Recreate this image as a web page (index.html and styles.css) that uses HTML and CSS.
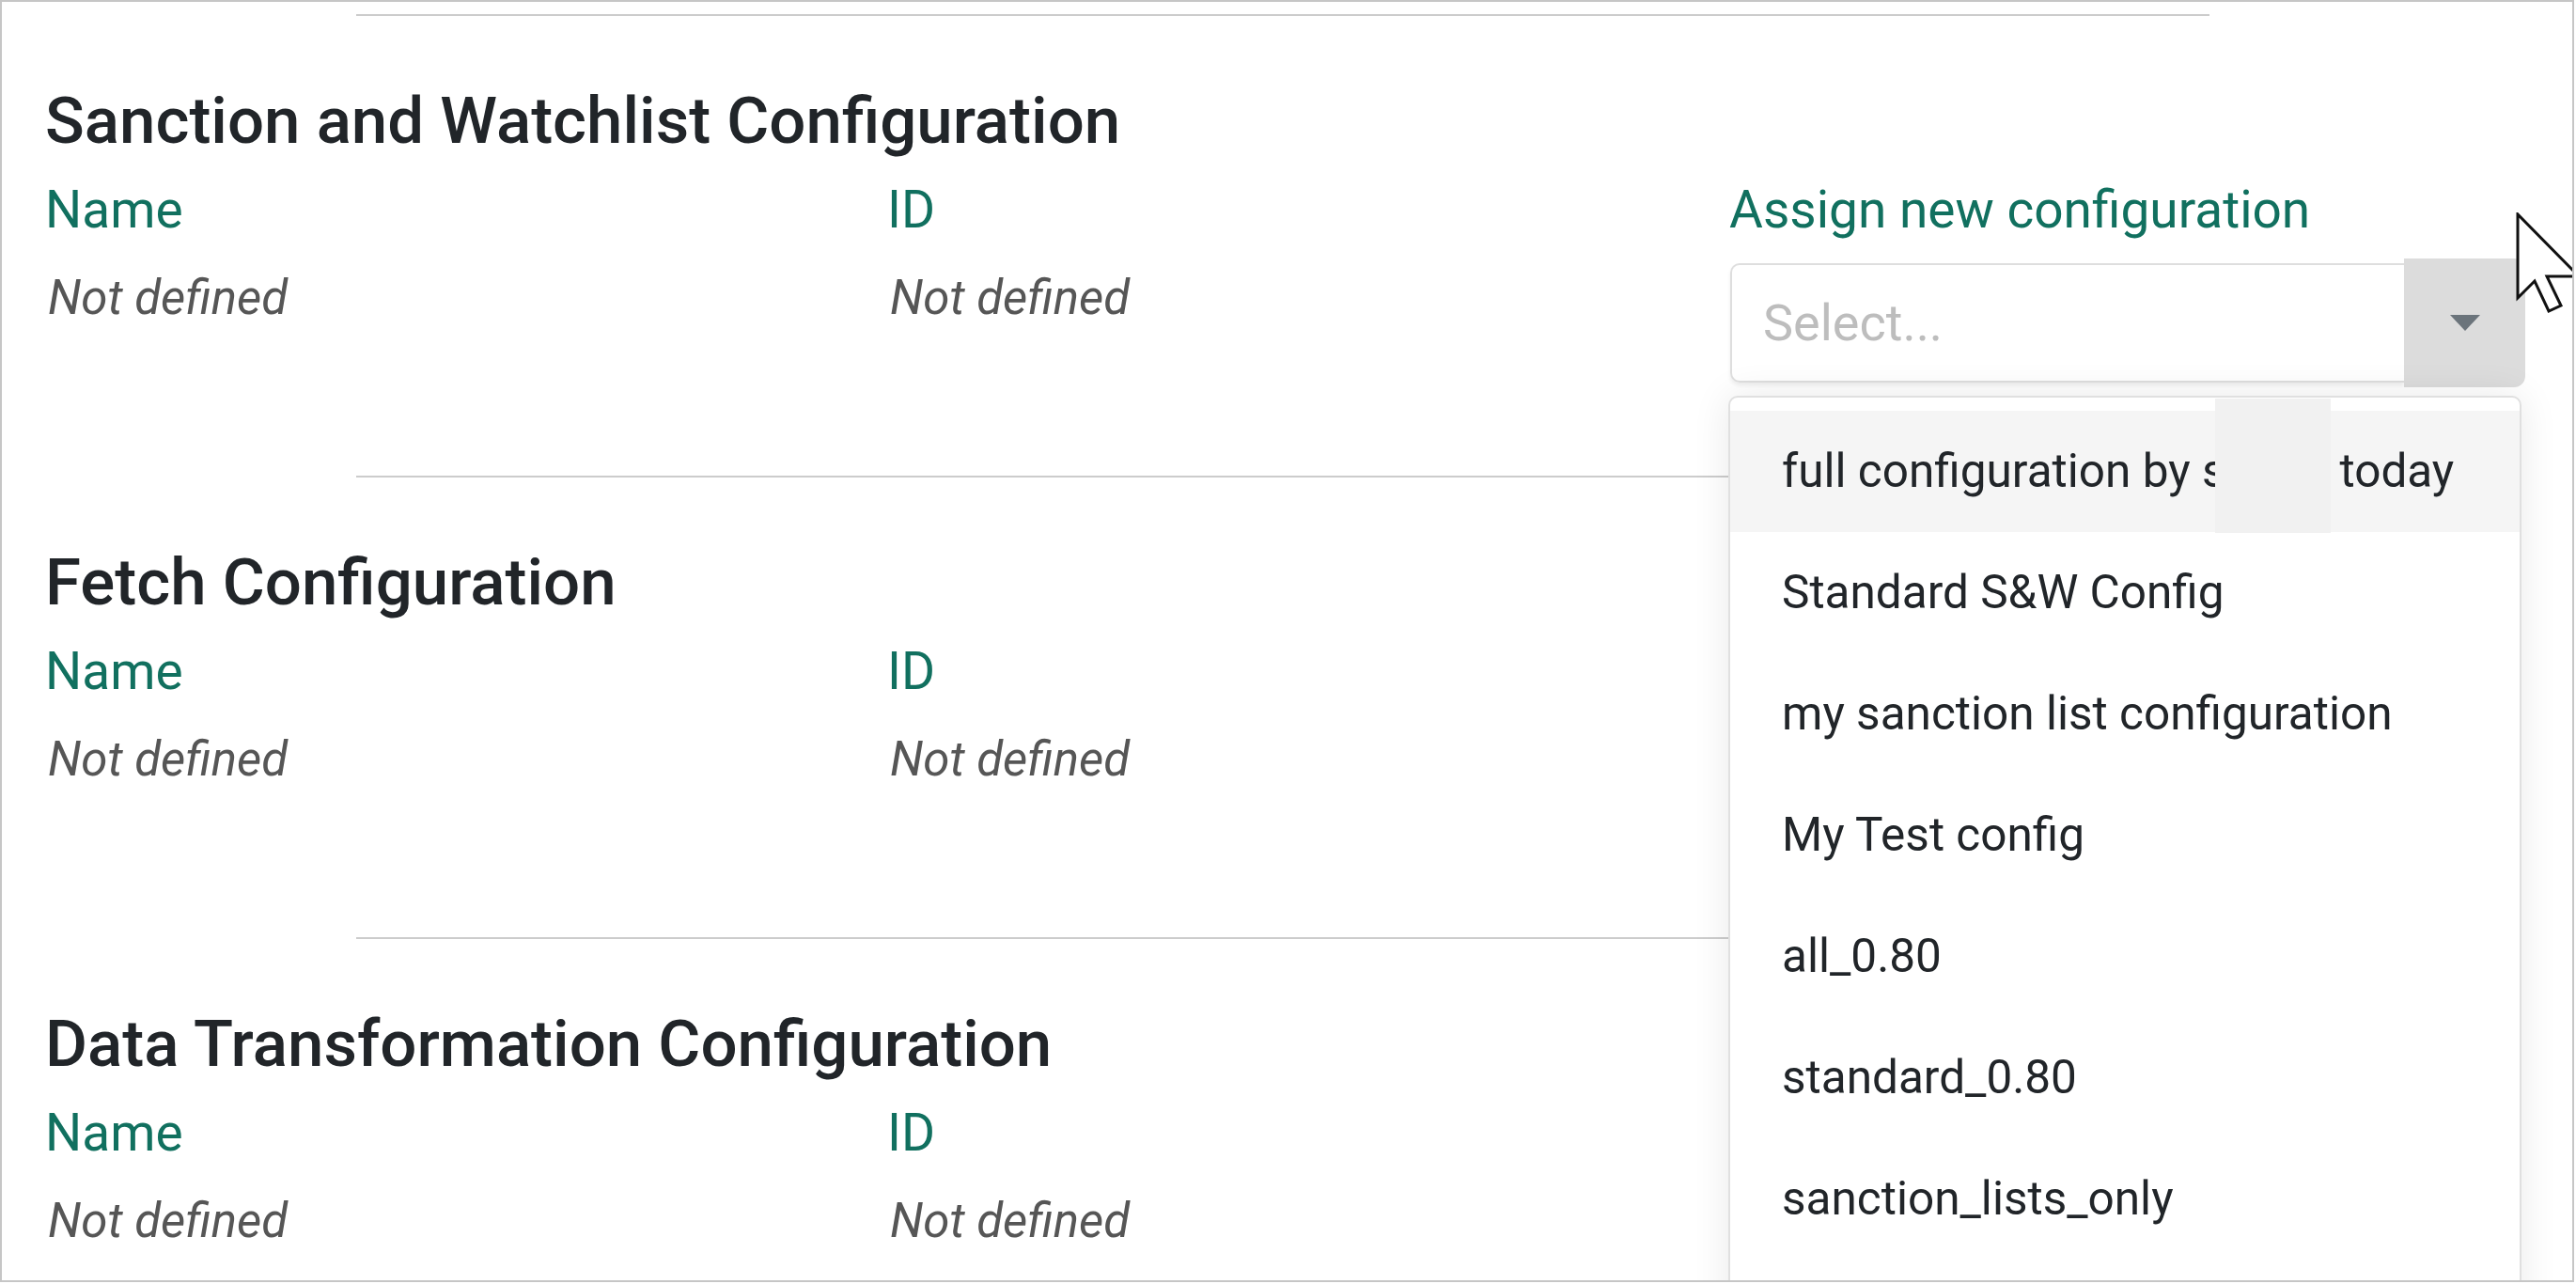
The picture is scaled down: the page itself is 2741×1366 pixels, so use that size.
FILE: index.html
```html
<!DOCTYPE html>
<html lang="en">
<head>
<meta charset="utf-8">
<title>Configuration</title>
<link rel="stylesheet" href="styles.css">
</head>
<body>
<div class="frame">
  <section class="cfg">
    <div class="sep"></div>
    <h2 class="cfg-title">Sanction and Watchlist Configuration</h2>
    <div class="fields">
      <div class="label">Name</div>
      <div class="label">ID</div>
      <div class="label">Assign new configuration</div>
      <div class="value">Not defined</div>
      <div class="value">Not defined</div>
      <div class="select-cell">
        <div class="select">
          <div class="select-field">Select...</div>
          <div class="select-btn"><span class="caret"></span></div>
        </div>
        <ul class="menu">
          <li class="menu-item is-active">full configuration by s<span class="gap"></span>today<span class="redact"></span></li>
          <li class="menu-item">Standard S&amp;W Config</li>
          <li class="menu-item">my sanction list configuration</li>
          <li class="menu-item">My Test config</li>
          <li class="menu-item">all_0.80</li>
          <li class="menu-item">standard_0.80</li>
          <li class="menu-item">sanction_lists_only</li>
        </ul>
      </div>
    </div>
  </section>
  <section class="cfg">
    <div class="sep"></div>
    <h2 class="cfg-title">Fetch Configuration</h2>
    <div class="fields">
      <div class="label">Name</div>
      <div class="label">ID</div>
      <div class="label"></div>
      <div class="value">Not defined</div>
      <div class="value">Not defined</div>
      <div class="value"></div>
    </div>
  </section>
  <section class="cfg">
    <div class="sep"></div>
    <h2 class="cfg-title">Data Transformation Configuration</h2>
    <div class="fields">
      <div class="label">Name</div>
      <div class="label">ID</div>
      <div class="label"></div>
      <div class="value">Not defined</div>
      <div class="value">Not defined</div>
      <div class="value"></div>
    </div>
  </section>
  <svg class="cursor" width="80" height="120" viewBox="0 0 80 120">
    <path d="M2 2 L2 91 L20 73 L35 105 L48 99 L33 68 L67 68 Z" fill="#ffffff" stroke="#111111" stroke-width="3" stroke-linejoin="miter"/>
  </svg>
</div>
</body>
</html>
```

FILE: styles.css
```css
* { box-sizing: border-box; }

html, body {
  margin: 0;
  padding: 0;
  background: #ffffff;
  font-family: Roboto, "Liberation Sans", Arial, sans-serif;
}

.frame {
  position: relative;
  width: 2739px;
  height: 1364px;
  border: 2px solid #c6c6c6;
  padding-top: 13px;
  overflow: hidden;
  background: #ffffff;
}

.cfg {
  padding-left: 46px;
  padding-bottom: 159px;
}

.sep {
  height: 2px;
  margin-left: 331px;
  width: 1972px;
  background: #cccccc;
}

.cfg-title {
  margin: 72px 0 0 0;
  font-size: 69px;
  line-height: 80px;
  font-weight: 500;
  color: #212529;
}

.fields {
  margin-top: 24px;
  display: grid;
  grid-template-columns: 896px 896px 1fr;
  grid-template-rows: 60px 60px;
  row-gap: 34px;
}

.label {
  font-size: 55px;
  line-height: 60px;
  color: #11705f;
}

.value {
  padding-left: 3px;
  font-size: 51px;
  line-height: 60px;
  font-style: italic;
  color: #565656;
}

.select-cell {
  position: relative;
  margin-top: -12px;
  margin-left: 1px;
  width: 846px;
}

.select {
  display: flex;
  align-items: center;
  height: 137px;
}

.select-field {
  flex: 1;
  height: 127px;
  border: 2px solid #dedede;
  border-right: none;
  border-radius: 10px 0 0 10px;
  padding-left: 33px;
  font-size: 54px;
  line-height: 123px;
  color: #bdbdbd;
  box-shadow: 0 3px 4px rgba(0, 0, 0, 0.07);
}

.select-btn {
  width: 129px;
  height: 137px;
  background: #dcdcdc;
  border-radius: 0 12px 12px 0;
  display: flex;
  align-items: center;
  justify-content: center;
}

.caret {
  width: 0;
  height: 0;
  border-left: 16px solid transparent;
  border-right: 16px solid transparent;
  border-top: 17px solid #6b747b;
}

.menu {
  position: absolute;
  left: -2px;
  top: 146px;
  width: 844px;
  height: 1000px;
  margin: 0;
  padding: 14px 0 0 0;
  list-style: none;
  background: #ffffff;
  border: 2px solid #e0e0e0;
  border-radius: 10px;
  box-shadow: 0 0 40px rgba(0, 0, 0, 0.09);
  z-index: 5;
}

.menu-item {
  position: relative;
  height: 129px;
  padding-left: 55px;
  font-size: 49.5px;
  line-height: 129px;
  color: #212529;
  white-space: nowrap;
}

.menu-item.is-active {
  background: #f5f5f5;
}

.gap {
  display: inline-block;
  width: 121px;
}

.redact {
  position: absolute;
  left: 516px;
  top: -13px;
  width: 123px;
  height: 143px;
  background: #f1f1f1;
}

.cursor {
  position: absolute;
  left: 2675px;
  top: 224px;
  z-index: 10;
}
```
